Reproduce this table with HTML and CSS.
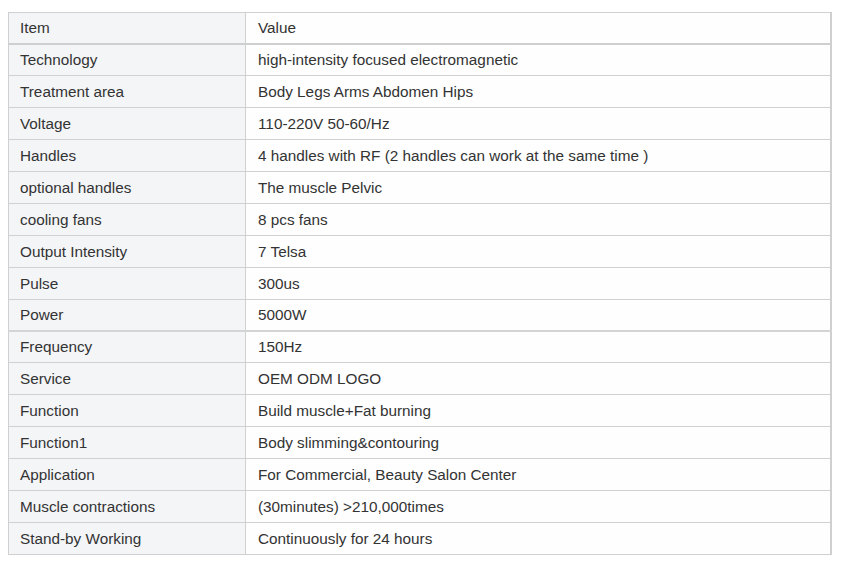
FILE: index.html
```html
<!DOCTYPE html>
<html>
<head>
<meta charset="utf-8">
<link rel="stylesheet" href="styles.css">
</head>
<body>
<table class="spec">
<thead>
<tr><th class="key">Item</th><th class="val">Value</th></tr>
</thead>
<tbody>
<tr><td class="key">Technology</td><td class="val">high-intensity focused electromagnetic</td></tr>
<tr><td class="key">Treatment area</td><td class="val">Body Legs Arms Abdomen Hips</td></tr>
<tr><td class="key">Voltage</td><td class="val">110-220V 50-60/Hz</td></tr>
<tr><td class="key">Handles</td><td class="val">4 handles with RF (2 handles can work at the same time )</td></tr>
<tr><td class="key">optional handles</td><td class="val">The muscle Pelvic</td></tr>
<tr><td class="key">cooling fans</td><td class="val">8 pcs fans</td></tr>
<tr><td class="key">Output Intensity</td><td class="val">7 Telsa</td></tr>
<tr><td class="key">Pulse</td><td class="val">300us</td></tr>
<tr class="split"><td class="key">Power</td><td class="val">5000W</td></tr>
<tr><td class="key">Frequency</td><td class="val">150Hz</td></tr>
<tr><td class="key">Service</td><td class="val">OEM ODM LOGO</td></tr>
<tr><td class="key">Function</td><td class="val">Build muscle+Fat burning</td></tr>
<tr><td class="key">Function1</td><td class="val">Body slimming&amp;contouring</td></tr>
<tr><td class="key">Application</td><td class="val">For Commercial, Beauty Salon Center</td></tr>
<tr><td class="key">Muscle contractions</td><td class="val">(30minutes) &gt;210,000times</td></tr>
<tr><td class="key">Stand-by Working</td><td class="val">Continuously for 24 hours</td></tr>
</tbody>
</table>
</body>
</html>
```
FILE: styles.css
```css
html, body {
  margin: 0;
  padding: 0;
  background: #ffffff;
}
body {
  padding: 12px 0 0 8px;
  font-family: "Liberation Sans", Arial, sans-serif;
  font-size: 15.3px;
  color: #333333;
}
.spec {
  border-collapse: collapse;
  width: 824px;
  border-right: 2px solid #cfcfcf;
}
.spec th, .spec td {
  height: 32px;
  padding: 0 0 0 11px;
  border: 1px solid #d0d0d0;
  text-align: left;
  font-weight: normal;
  vertical-align: middle;
  box-sizing: border-box;
}
.spec .key {
  width: 237px;
  background: #f4f5f7;
}
.spec .val {
  background: #fefefe;
  padding-left: 12px;
}
.spec thead th {
  background: #f4f5f7;
  border-bottom: 2px solid #cfcfcf;
  height: 31px;
}
.spec tr.split td {
  height: 31px;
  border-bottom: 2px solid #d4d4d4;
}
```
